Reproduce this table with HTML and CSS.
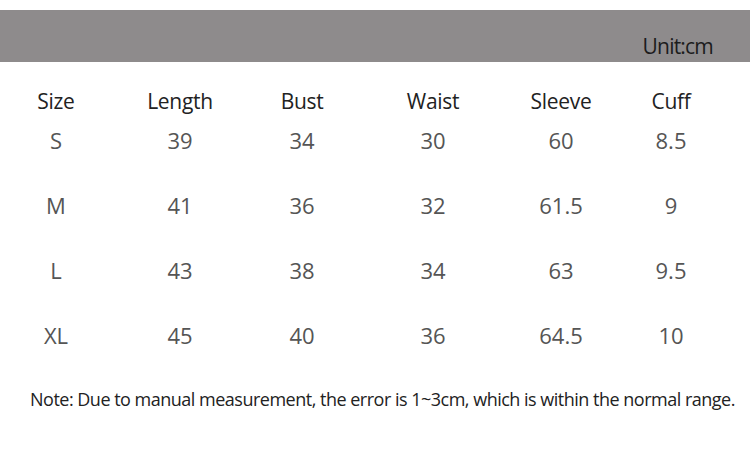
FILE: index.html
```html
<!DOCTYPE html>
<html>
<head>
<meta charset="utf-8">
<link rel="stylesheet" href="styles.css">
</head>
<body>
<div class="page">
  <div class="banner"><span class="unit">Unit:cm</span></div>
  <div class="table">
    <div class="row head">
      <div class="cell">Size</div>
      <div class="cell">Length</div>
      <div class="cell">Bust</div>
      <div class="cell">Waist</div>
      <div class="cell">Sleeve</div>
      <div class="cell">Cuff</div>
    </div>
    <div class="row">
      <div class="cell">S</div>
      <div class="cell">39</div>
      <div class="cell">34</div>
      <div class="cell">30</div>
      <div class="cell">60</div>
      <div class="cell">8.5</div>
    </div>
    <div class="row">
      <div class="cell">M</div>
      <div class="cell">41</div>
      <div class="cell">36</div>
      <div class="cell">32</div>
      <div class="cell">61.5</div>
      <div class="cell">9</div>
    </div>
    <div class="row">
      <div class="cell">L</div>
      <div class="cell">43</div>
      <div class="cell">38</div>
      <div class="cell">34</div>
      <div class="cell">63</div>
      <div class="cell">9.5</div>
    </div>
    <div class="row">
      <div class="cell">XL</div>
      <div class="cell">45</div>
      <div class="cell">40</div>
      <div class="cell">36</div>
      <div class="cell">64.5</div>
      <div class="cell">10</div>
    </div>
  </div>
  <p class="note">Note: Due to manual measurement, the error is 1~3cm, which is within the normal range.</p>
</div>
</body>
</html>
```
FILE: styles.css
```css
html, body {
  margin: 0;
  padding: 0;
  background: #ffffff;
}
.page {
  width: 750px;
  height: 475px;
  padding-top: 10px;
  box-sizing: border-box;
  font-family: "Open Sans", "Noto Sans", sans-serif;
}
.banner {
  height: 52px;
  background: #8e8b8c;
  display: flex;
  justify-content: flex-end;
  align-items: flex-end;
  padding-right: 37px;
}
.unit {
  font-size: 21px;
  color: #1c1c1c;
  line-height: 28px;
  margin-bottom: 2px;
  letter-spacing: -0.8px;
}
.table {
  display: flex;
  flex-direction: column;
}
.row {
  display: grid;
  grid-template-columns: 112px 136px 108px 154px 102px 118px;
  height: 65px;
  align-items: start;
  line-height: 30px;
  font-size: 22px;
  color: #555555;
}
.row.head {
  height: 30px;
  margin-top: 24px;
  margin-bottom: 9px;
  color: #222222;
  font-size: 21px;
  letter-spacing: -0.3px;
}
.cell {
  text-align: center;
}
.note {
  margin: 2px 0 0 30px;
  font-size: 18px;
  line-height: 24px;
  color: #222222;
  letter-spacing: -0.5px;
  white-space: nowrap;
}
```
